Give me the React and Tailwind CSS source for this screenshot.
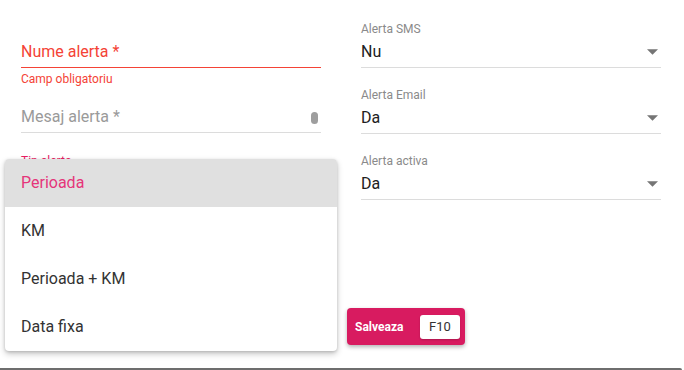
import React from "react";

function Arrow() {
  return (
    <svg width="11" height="6" viewBox="0 0 10 5" className="shrink-0">
      <path d="M0 0 L5 5 L10 0 Z" fill="#757575" />
    </svg>
  );
}

function SelectField({ label, value }) {
  return (
    <div className="flex flex-col">
      <div className="h-4 text-[12px] leading-4 text-[#8a8a8a]">{label}</div>
      <div className="flex items-center justify-between pt-[5px] pb-[6px] pr-[3px] border-b border-[#dcdcdc]">
        <span className="text-[16px] leading-[19px] text-[#212121]">{value}</span>
        <Arrow />
      </div>
    </div>
  );
}

export default function App() {
  return (
    <div
      className="relative w-[684px] h-[370px] bg-white flex flex-col overflow-hidden"
      style={{ fontFamily: "Roboto, 'Noto Sans', sans-serif" }}
    >
      <div className="grid grid-cols-[300px_300px] gap-x-[40px] pl-[21px] pt-[21px]">
        {/* Left column */}
        <div className="flex flex-col">
          <div className="flex flex-col">
            <div className="h-4" />
            <div className="flex items-center pt-[5px] pb-[6px] border-b border-[#f44336]">
              <span className="text-[16px] leading-[19px] text-[#f44336]">Nume alerta *</span>
            </div>
          </div>
          <div className="mt-[5px] h-[13px] text-[12px] leading-[13px] text-[#f44336]">Camp obligatoriu</div>
          <div className="flex flex-col">
            <div className="h-4" />
            <div className="flex items-center justify-between pt-[5px] pb-[6px] pr-[3px] border-b border-[#dcdcdc]">
              <span className="text-[16px] leading-[19px] text-[#9a9a9a]">Mesaj alerta *</span>
              <span className="w-[7px] h-[12px] rounded-full bg-[#9e9e9e] mt-[2px]" />
            </div>
          </div>
          <div className="mt-[20px] flex flex-col">
            <div className="h-4 text-[12px] leading-4 text-[#e91e63]">Tip alerta</div>
            <div className="h-[31px] border-b border-[#dcdcdc]" />
          </div>
        </div>

        {/* Right column */}
        <div className="flex flex-col gap-[19px]">
          <SelectField label="Alerta SMS" value="Nu" />
          <SelectField label="Alerta Email" value="Da" />
          <SelectField label="Alerta activa" value="Da" />
        </div>
      </div>

      <div className="mt-[108px] ml-[347px]">
        <button className="flex items-center w-[118px] h-[37px] rounded-[4px] bg-[#d81b60] pl-[8px] pr-[5px] shadow-[0_2px_4px_rgba(0,0,0,0.3)]">
          <span className="text-[12px] font-bold text-white leading-none">Salveaza</span>
          <span className="ml-auto flex items-center justify-center w-[40px] h-[24px] rounded-[3px] bg-white text-[13px] text-[#333] leading-none shadow-[0_1px_2px_rgba(0,0,0,0.2)]">
            F10
          </span>
        </button>
      </div>

      <div className="mt-auto w-[682px] h-[2px] bg-[#6e6e6e] rounded-tr-[2px]" />

      {/* Open dropdown menu */}
      <div className="absolute left-[5px] top-[159px] w-[332px] bg-white rounded-[4px] overflow-hidden shadow-[0_3px_6px_rgba(0,0,0,0.22),0_1px_3px_rgba(0,0,0,0.15)]">
        <div className="h-[48px] flex items-center pl-[16px] bg-[#e0e0e0] text-[16px] text-[#e5357a]">Perioada</div>
        <div className="h-[48px] flex items-center pl-[16px] text-[16px] text-[#333]">KM</div>
        <div className="h-[48px] flex items-center pl-[16px] text-[16px] text-[#333]">Perioada + KM</div>
        <div className="h-[48px] flex items-center pl-[16px] text-[16px] text-[#333]">Data fixa</div>
      </div>
    </div>
  );
}
